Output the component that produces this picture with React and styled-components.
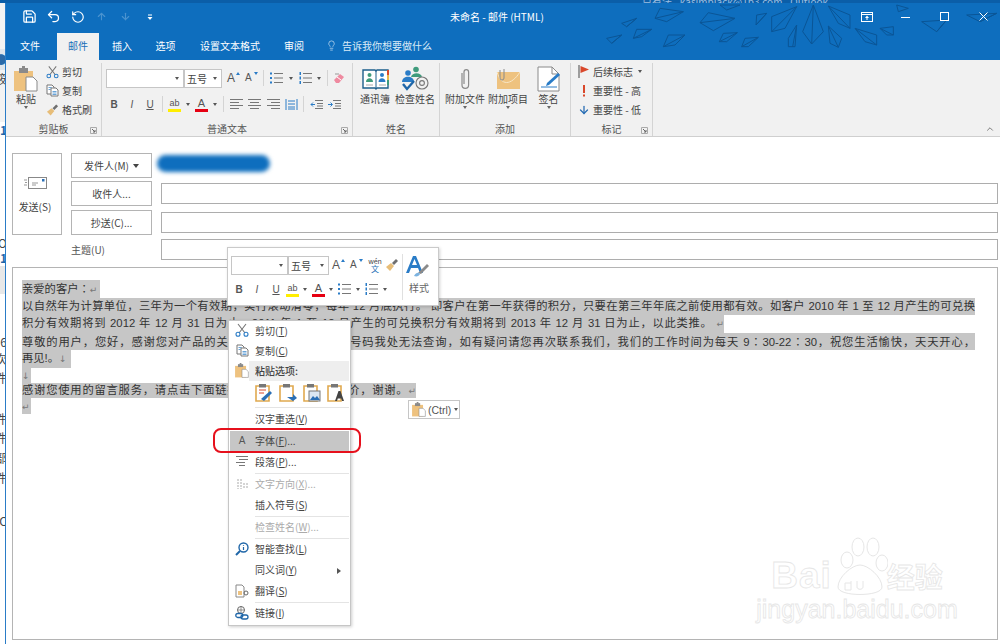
import React from 'react';
import styled, { createGlobalStyle } from 'styled-components';
import { ChevronUp, Save, Undo2, RotateCcw, ArrowUp, ArrowDown, Lightbulb } from 'lucide-react';

const CJK = '"Noto Sans CJK SC", "Liberation Sans", sans-serif';

const GlobalStyle = createGlobalStyle`
  html, body { margin: 0; padding: 0; background: #fff; }
  body { font-family: ${CJK}; font-size: 10px; color: #444; }
  * { box-sizing: border-box; }
`;

const Page = styled.div`
  position: relative;
  width: 1000px;
  height: 644px;
  overflow: hidden;
  background: #fff;
`;

const BackTitle = styled.div`
  height: 3px;
  overflow: hidden;
  background: #0b5ea8;
  color: #9dbfe0;
  font-size: 10px;
  line-height: 3px;
  text-align: center;
  padding-left: 470px;
`;

const Desktop = styled.div`
  display: flex;
  height: 641px;
`;

const BackStrip = styled.div`
  width: 5px;
  flex: none;
  display: flex;
  flex-direction: column;
  overflow: hidden;
  background: #fff;
`;

const BackFrag = styled.div`
  height: ${(p) => p.$h}px;
  width: 12px;
  margin-left: -5px;
  background: ${(p) => p.$bg || 'transparent'};
  color: ${(p) => p.$color || '#444'};
  font-size: 12px;
  line-height: ${(p) => p.$h}px;
  font-weight: ${(p) => (p.$bold ? 700 : 400)};
  text-align: right;
  white-space: nowrap;
`;

const Window = styled.div`
  flex: 1;
  min-width: 0;
  display: flex;
  flex-direction: column;
  border-left: 1px solid #2a7cc7;
  background: #fff;
`;

const TitleBand = styled.div`
  position: relative;
  height: 57px;
  flex: none;
  background: #0e6ebe;
  color: #fff;
`;

const PlaneArt = styled.svg`
  position: absolute;
  right: 0;
  top: 0;
  width: 500px;
  height: 57px;
`;

const TitleBar = styled.div`
  position: relative;
  height: 30px;
  padding-bottom: 3px;
  display: flex;
  align-items: center;
`;

const Quick = styled.div`
  display: flex;
  align-items: center;
  width: 260px;
  padding-left: 15px;
  gap: 7px;
`;

const QuickBtn = styled.span`
  display: inline-flex;
  width: 17px;
  justify-content: center;
  color: ${(p) => (p.$off ? '#4b93cf' : '#fff')};
`;

const DocTitle = styled.div`
  width: 180px;
  margin-left: 184px;
  font-size: 10px;
  white-space: nowrap;
`;

const WinControls = styled.div`
  position: absolute;
  right: 0;
  top: 0;
  height: 28px;
  display: flex;
  align-items: center;
  gap: 7px;
`;

const WinBtn = styled.span`
  display: inline-flex;
  justify-content: center;
  width: 32px;
`;

const Tabs = styled.div`
  position: relative;
  height: 27px;
  display: flex;
  align-items: stretch;
`;

const Tab = styled.div`
  width: ${(p) => p.$w}px;
  margin-left: ${(p) => p.$ml || 0}px;
  padding-bottom: 2px;
  display: flex;
  align-items: center;
  justify-content: center;
  font-size: 10px;
  white-space: nowrap;
  background: ${(p) => (p.$active ? '#f1f1f1' : 'transparent')};
  color: ${(p) => (p.$active ? '#1a6fb8' : '#fff')};
`;

const TellMe = styled.div`
  display: flex;
  align-items: center;
  gap: 5px;
  margin-left: 12px;
  padding-bottom: 2px;
  font-size: 10px;
  color: #dcebf7;
`;

const Ribbon = styled.div`
  position: relative;
  height: 77px;
  flex: none;
  display: flex;
  background: #f1f1f1;
  border-bottom: 1px solid #cfcfcf;
  padding: 3px 0 0;
`;

const Group = styled.div`
  position: relative;
  width: ${(p) => p.$w}px;
  flex: none;
  display: flex;
  flex-direction: column;
  border-right: ${(p) => (p.$plain ? 'none' : '1px solid #d4d4d4')};
`;

const GroupBody = styled.div`
  flex: 1;
  min-height: 0;
  display: flex;
  gap: ${(p) => p.$gap || 0}px;
  flex-direction: ${(p) => (p.$col ? 'column' : 'row')};
  padding-left: ${(p) => p.$pl || 0}px;
`;

const GroupLabel = styled.div`
  height: 15px;
  line-height: 15px;
  text-align: center;
  font-size: 10px;
  color: #555;
`;

const CollapseBar = styled(GroupLabel)`
  text-align: right;
  padding-right: 4px;
  line-height: 17px;
`;

const Launcher = styled.svg`
  position: absolute;
  right: 4px;
  bottom: 2px;
  width: 7px;
  height: 7px;
`;

const LargeBtn = styled.div`
  width: ${(p) => p.$w}px;
  display: flex;
  flex-direction: column;
  align-items: center;
  flex: none;
  font-size: 10px;
  color: #444;
  white-space: nowrap;
`;

const LargeIcon = styled.div`
  height: 25px;
  margin-top: 3px;
  display: flex;
  align-items: center;
  justify-content: center;
`;

const LargeText = styled.div`
  line-height: 15px;
`;

const SmallStack = styled.div`
  display: flex;
  flex-direction: column;
  margin-top: -1px;
`;

const SmallBtn = styled.div`
  height: 19px;
  display: flex;
  align-items: center;
  gap: 3px;
  font-size: 10px;
  white-space: nowrap;
  color: #444;
`;

const IconSlot = styled.span`
  width: ${(p) => p.$w || 13}px;
  display: inline-flex;
  align-items: center;
  justify-content: center;
  flex: none;
`;

const Caret = styled.span`
  display: inline-block;
  width: 0;
  height: 0;
  flex: none;
  margin-left: ${(p) => p.$ml || 0}px;
  border-left: ${(p) => p.$size || 2.5}px solid transparent;
  border-right: ${(p) => p.$size || 2.5}px solid transparent;
  border-top: ${(p) => (p.$size || 2.5) + 0.5}px solid ${(p) => p.$color || '#555'};
`;

const ToolRow = styled.div`
  display: flex;
  align-items: center;
  height: ${(p) => p.$h}px;
  margin-top: ${(p) => p.$mt || 0}px;
  flex: none;
`;

const ComboBox = styled.div`
  width: ${(p) => p.$w}px;
  height: 19px;
  display: flex;
  align-items: center;
  justify-content: space-between;
  padding: 0 4px 0 2px;
  background: #fff;
  border: 1px solid #c6c6c6;
  margin-left: ${(p) => p.$ml || 0}px;
  font-size: 10px;
  color: #444;
  flex: none;
`;

const ToolGap = styled.span`
  display: inline-flex;
  align-items: center;
  flex: none;
  margin-left: ${(p) => p.$ml || 0}px;
`;

const ToolSep = styled.span`
  width: 1px;
  height: 16px;
  flex: none;
  background: #d4d4d4;
  margin-left: ${(p) => p.$ml || 0}px;
`;

const Letter = styled.span`
  flex: none;
  width: ${(p) => p.$w || 12}px;
  margin-left: ${(p) => p.$ml || 0}px;
  text-align: center;
  font-family: "Liberation Sans", sans-serif;
  font-size: 10px;
  font-weight: ${(p) => (p.$b ? 700 : 400)};
  font-style: ${(p) => (p.$i ? 'italic' : 'normal')};
  text-decoration: ${(p) => (p.$u ? 'underline' : 'none')};
  color: #555;
`;

const GrowA = styled.span`
  position: relative;
  flex: none;
  width: 14px;
  margin-left: ${(p) => p.$ml || 0}px;
  font-family: "Liberation Sans", sans-serif;
  font-size: ${(p) => p.$size}px;
  line-height: 14px;
  color: #555;
  &::after {
    content: '';
    position: absolute;
    right: 1px;
    top: 1px;
    border-left: 2.5px solid transparent;
    border-right: 2.5px solid transparent;
    ${(p) => (p.$up ? 'border-bottom: 3px solid #2a7cc7;' : 'border-top: 3px solid #2a7cc7;')}
  }
`;

const ColorLetter = styled.span`
  flex: none;
  width: 13px;
  height: 15px;
  margin-left: ${(p) => p.$ml || 0}px;
  text-align: center;
  font-family: "Liberation Sans", sans-serif;
  font-size: ${(p) => p.$size || 11}px;
  line-height: 12px;
  color: #555;
  border-bottom: 3px solid ${(p) => p.$bar};
`;

const Compose = styled.div`
  flex: 1;
  min-height: 0;
  display: flex;
  flex-direction: column;
  padding: 16px 2px 4px 6px;
`;

const AddressBlock = styled.div`
  display: flex;
  align-items: flex-start;
  gap: 9px;
`;

const SendBtn = styled.div`
  width: 50px;
  height: 82px;
  flex: none;
  display: flex;
  flex-direction: column;
  align-items: center;
  gap: 10px;
  padding: 23px 4px 0 0;
  border: 1px solid #b4b4b4;
  font-size: 10px;
  color: #444;
`;

const Fields = styled.div`
  flex: 1;
  min-width: 0;
  display: flex;
  flex-direction: column;
`;

const FieldRow = styled.div`
  position: relative;
  display: flex;
  align-items: center;
  gap: 9px;
  height: ${(p) => p.$h}px;
  margin-bottom: ${(p) => p.$mb || 0}px;
`;

const AddrBtn = styled.div`
  width: 81px;
  height: 25px;
  flex: none;
  display: flex;
  align-items: center;
  justify-content: center;
  gap: 3px;
  border: 1px solid #b4b4b4;
  background: #fff;
  font-size: 10px;
  color: #444;
`;

const AddrInput = styled.div`
  flex: 1;
  height: 21px;
  border: 1px solid #adadad;
  background: #fff;
`;

const SubjectLabel = styled.div`
  width: 81px;
  flex: none;
  font-size: 10px;
  color: #555;
`;

const BlurName = styled.div`
  width: 113px;
  height: 17px;
  margin-top: -5px;
  margin-left: -4px;
  border-radius: 9px;
  background: #0e6ebe;
  filter: blur(2px);
`;

const BodyBox = styled.div`
  flex: 1;
  min-height: 0;
  margin-top: 7px;
  padding: 12px 0 0 9px;
  border: 1px solid #b4b4b4;
  font-family: "Liberation Sans", ${CJK};
  font-size: 11.3px;
  color: #333;
`;

const TextLine = styled.div`
  width: ${(p) => p.$w}px;
  height: ${(p) => p.$h || 17.5}px;
  line-height: ${(p) => p.$h || 17.5}px;
  background: #c6c6c6;
  white-space: nowrap;
  overflow: hidden;
  text-align-last: ${(p) => (p.$fit ? 'justify' : 'left')};
`;

const Mark = styled.span`
  font-family: "DejaVu Sans", sans-serif;
  font-size: 9px;
  color: #777;
`;

const Colon = styled.span`
  font-family: "Noto Sans CJK TC", sans-serif;
`;

const MiniBar = styled.div`
  position: absolute;
  left: 227px;
  top: 247px;
  width: 212px;
  height: 59px;
  display: flex;
  padding: 7px 3px 0 3px;
  background: #fff;
  border: 1px solid #cacaca;
  box-shadow: 1px 1px 3px rgba(0, 0, 0, 0.18);
`;

const MiniLeft = styled.div`
  width: 168px;
  flex: none;
`;

const MiniRight = styled.div`
  flex: 1;
  display: flex;
  flex-direction: column;
  align-items: center;
  margin: -1px 0 5px 3px;
  border-left: 1px solid #e0e0e0;
  font-size: 10px;
  color: #666;
  gap: 2px;
`;

const WenBtn = styled.span`
  flex: none;
  width: 16px;
  margin-left: ${(p) => p.$ml}px;
  display: flex;
  flex-direction: column;
  align-items: center;
  font-size: 7px;
  line-height: 8px;
  color: #444;
  & b {
    font-weight: 400;
    color: #1f6fb5;
    font-size: 8px;
  }
`;

const Menu = styled.div`
  position: absolute;
  left: 228px;
  top: 320px;
  width: 123px;
  height: 306px;
  padding: 0 1px;
  background: #fff;
  border: 1px solid #c6c6c6;
  box-shadow: 1px 1px 3px rgba(0, 0, 0, 0.2);
`;

const MenuRow = styled.div`
  height: ${(p) => p.$h || 21}px;
  display: flex;
  align-items: center;
  font-size: 10px;
  color: ${(p) => (p.$off ? '#ababab' : '#444')};
  background: ${(p) => (p.$hot ? '#c6c6c6' : 'transparent')};
`;

const MenuIcon = styled.span`
  width: 24px;
  flex: none;
  display: inline-flex;
  justify-content: center;
  margin-bottom: 2px;
  color: ${(p) => (p.$off ? '#ababab' : '#555')};
  font-family: "Liberation Sans", sans-serif;
`;

const MenuText = styled.span`
  flex: 1;
  margin-left: ${(p) => (p.$band ? -5 : 0)}px;
  height: 100%;
  display: flex;
  align-items: center;
  padding-left: ${(p) => (p.$band ? 6 : 1)}px;
  padding-bottom: 2px;
  background: ${(p) => (p.$band ? '#eeeeee' : 'transparent')};
  font-weight: ${(p) => (p.$band ? 500 : 400)};
  & u {
    text-underline-offset: 1px;
  }
`;

const MenuArrow = styled.span`
  margin-right: 8px;
  border-top: 3px solid transparent;
  border-bottom: 3px solid transparent;
  border-left: 4px solid #555;
`;

const MenuSep = styled.div`
  height: 1px;
  margin-left: 25px;
  background: #e4e4e4;
`;

const PasteIcons = styled.div`
  height: 26px;
  display: flex;
  align-items: center;
  gap: 6px;
  padding: 0 0 3px 25px;
`;

const RedRing = styled.div`
  position: absolute;
  left: 213px;
  top: 428px;
  width: 148px;
  height: 25px;
  border: 2.5px solid #e6101c;
  border-radius: 8px;
`;

const CtrlTag = styled.div`
  position: absolute;
  left: 408px;
  top: 400px;
  width: 52px;
  height: 19px;
  display: flex;
  align-items: center;
  gap: 2px;
  padding-left: 3px;
  background: #fff;
  border: 1px solid #c6c6c6;
  font-family: "Liberation Sans", sans-serif;
  font-size: 10.5px;
  color: #555;
`;

const Watermark = styled.div`
  position: absolute;
  left: 767px;
  top: 535px;
  width: 180px;
  height: 92px;
  display: flex;
  flex-direction: column;
  align-items: center;
  color: #fff;
  -webkit-text-stroke: 0.8px #e6e6e6;
`;

const WaterTop = styled.div`
  display: flex;
  align-items: flex-end;
  height: 63px;
`;

const WaterBai = styled.span`
  font-family: "Liberation Sans", sans-serif;
  font-weight: 700;
  font-size: 37px;
  line-height: 44px;
  letter-spacing: 1px;
`;

const WaterJing = styled.span`
  font-size: 28px;
  line-height: 44px;
  font-weight: 700;
  margin-left: -1px;
`;

const WaterUrl = styled.div`
  font-family: "Liberation Sans", sans-serif;
  font-size: 25px;
  line-height: 22px;
  white-space: nowrap;
`;

const Ico = ({ w, h, vb, children }) => (
  <svg width={w} height={h} viewBox={vb || `0 0 ${w} ${h}`} fill="none">
    {children}
  </svg>
);

const PLANES = [
  'M940 15L908 95L935 132L970 95ZM940 15L935 132',
  'M890 20L815 50L815 95L855 85ZM890 20L815 95',
  'M985 18L1050 45L1050 85L1015 70ZM985 18L1050 85',
  'M705 55L625 38L600 68L640 92ZM705 55L600 68',
  'M550 35L480 25L465 55L500 65ZM550 35L465 55',
  'M800 40L770 45L768 75ZM800 40L768 75',
  'M985 78L1025 115L1015 142L990 130ZM985 78L1015 142',
  'M890 75L865 115L865 140L885 140ZM890 75L878 140',
  'M1065 85L1130 105L1130 135L1095 125ZM1065 85L1130 135',
  'M1140 85L1180 80L1180 105L1160 105ZM1140 85L1180 105',
  'M455 88L410 88L400 115L425 110ZM455 88L400 115',
  'M410 55L365 70L380 80ZM410 55L380 80',
  'M365 105L320 115L335 130ZM365 105L335 130',
  'M555 105L505 105L490 140L525 135ZM555 105L490 140',
  'M712 98L670 100L658 125L680 125ZM712 98L658 125',
  'M775 112L735 115L725 140L745 140ZM775 112L725 140',
  'M1340 60L1265 65L1310 95ZM1340 60L1310 95',
  'M1490 40L1400 45L1440 65ZM1490 40L1440 65',
  'M720 15L660 15L680 30Z',
  'M1225 25L1190 15L1195 35Z',
];

const Scissors = () => (
  <Ico w={14} h={14}>
    <path d="M3 1l7 9M11 1L4 10" stroke="#777" strokeWidth="1.1" />
    <circle cx="3" cy="11.3" r="2" stroke="#2a7cc7" strokeWidth="1.1" />
    <circle cx="11" cy="11.3" r="2" stroke="#2a7cc7" strokeWidth="1.1" />
  </Ico>
);

const CopyDocs = () => (
  <Ico w={13} h={13}>
    <path d="M1 1h5l2 2v7H1z" fill="#fff" stroke="#777" />
    <path d="M5 4h5l2 2v6H5z" fill="#fff" stroke="#777" />
    <path d="M6.5 7.5h4M6.5 9h4M6.5 10.5h4" stroke="#2a7cc7" strokeWidth=".7" />
    <path d="M2.5 3.5h3M2.5 5.5h2" stroke="#2a7cc7" strokeWidth=".7" />
  </Ico>
);

const Brush = () => (
  <Ico w={14} h={14}>
    <path d="M1 9l5-4 3 3-4 5z" fill="#e7bd78" />
    <path d="M7 5l4-4 2 2-4 4z" fill="#6f6f6f" />
  </Ico>
);

const Board = ({ w = 24, h = 26 }) => (
  <Ico w={w} h={h} vb="0 0 24 26">
    <rect x="0" y="5" width="19" height="20" fill="#eec27f" />
    <rect x="5" y="2" width="9" height="5" fill="#8a8a8a" />
    <rect x="8" y="0" width="3" height="3" fill="#8a8a8a" />
    <path d="M12 11h7l4 4v10H12z" fill="#fff" stroke="#8a8a8a" />
  </Ico>
);

const PasteChoice = ({ children }) => (
  <Ico w={18} h={19} vb="0 0 18 19">
    <path d="M1 3h13v15H1z" fill="#fff" stroke="#e0a94f" strokeWidth="1.6" />
    <rect x="4" y="1" width="7" height="3.5" fill="#777" />
    {children}
  </Ico>
);

const Lines = ({ rows, bullets, nums }) => (
  <Ico w={13} h={12}>
    {rows.map(([x1, x2], i) => (
      <path key={i} d={`M${x1} ${1.5 + i * (9 / (rows.length - 1))}H${x2}`} stroke="#777" />
    ))}
    {bullets && [1.5, 6, 10.5].map((y) => <rect key={y} x="0" y={y - 1} width="2" height="2" fill="#2a7cc7" />)}
    {nums && [1.5, 6, 10.5].map((y) => <rect key={y} x=".5" y={y - 1.5} width="1.5" height="3" fill="#2a7cc7" />)}
  </Ico>
);

const ALIGN_LEFT = [[0, 13], [0, 9], [0, 13], [0, 9]];
const ALIGN_MID = [[0, 13], [2, 11], [0, 13], [2, 11]];
const ALIGN_RIGHT = [[0, 13], [4, 13], [0, 13], [4, 13]];
const LIST = [[4, 13], [4, 13], [4, 13]];

const BookIcon = () => (
  <Ico w={27} h={23}>
    <path d="M1 3h12l1 1 1-1h11v18H15l-1 1-1-1H1z" fill="#fff" stroke="#1d5f8c" strokeWidth="1.4" />
    <path d="M14 4v17" stroke="#1d5f8c" />
    <circle cx="7.5" cy="8" r="2" fill="#3f9b7c" />
    <path d="M4 15c0-5 7-5 7 0z" fill="#3f9b7c" />
    <circle cx="20" cy="8" r="2" fill="#2a7cc7" />
    <path d="M16.5 15c0-5 7-5 7 0z" fill="#2a7cc7" />
    <path d="M4 18h7M17 18h7" stroke="#aaa" />
    <path d="M26 3v5" stroke="#d9482b" strokeWidth="2" />
    <path d="M26 8v5" stroke="#e9b949" strokeWidth="2" />
    <path d="M26 13v5" stroke="#3f9b7c" strokeWidth="2" />
  </Ico>
);

const CheckNames = () => (
  <Ico w={28} h={25}>
    <circle cx="15" cy="3.5" r="2.8" fill="#3f9b7c" />
    <circle cx="7" cy="7" r="2.8" fill="#2a7cc7" />
    <path d="M1 16c0-7 12-7 12 0z" fill="#2a7cc7" />
    <path d="M10 11c1-5 10-5 11 0z" fill="#3f9b7c" />
    <path d="M2 18l4 5 7-8" stroke="#1f66a8" strokeWidth="2.4" />
    <circle cx="21" cy="17" r="6" stroke="#777" strokeWidth="1.1" />
    <circle cx="21" cy="17" r="2.4" stroke="#777" strokeWidth="1.1" />
  </Ico>
);

const PaperClip = () => (
  <Ico w={12} h={24}>
    <path d="M3 6v12a3.3 3.3 0 006.6 0V5A2.3 2.3 0 005 5v12" stroke="#8a8a8a" strokeWidth="1.2" />
  </Ico>
);

const Envelope = () => (
  <Ico w={24} h={24}>
    <rect x="1" y="5" width="23" height="17" fill="#eec27f" />
    <path d="M1 5c4 14 14 14 23 0" stroke="#f8e6c6" />
    <path d="M4 3v8a2 2 0 004 0V2" stroke="#8a8a8a" />
  </Ico>
);

const SignDoc = () => (
  <Ico w={24} h={26}>
    <path d="M1 1h14l7 7v17H1z" fill="#fff" stroke="#8a8a8a" />
    <path d="M15 1v7h7" stroke="#8a8a8a" />
    <path d="M4 21h16" stroke="#2a7cc7" />
    <path d="M9 20l1-3 11-10 2 2-11 10z" fill="#2a7cc7" />
  </Ico>
);

const Launch = () => (
  <Launcher viewBox="0 0 7 7">
    <path d="M.5 6.5V.5h6v6z" stroke="#aaa" fill="none" />
    <path d="M2 2l3 3M5 3v2H3" stroke="#666" fill="none" />
  </Launcher>
);

const StyleA = () => (
  <Ico w={30} h={24}>
    <path d="M2 19L9 2h3l7 17h-3l-2-5H7l-2 5zM8 11h5l-2.5-6z" fill="#2a7cc7" />
    <path d="M14 19l9-9 2 2-8 8z" fill="#8a8a8a" />
    <path d="M10 22c2-4 5-4 6-2-1 2-3 3-6 2z" fill="#7cb3e0" />
  </Ico>
);

const SMALL_TOOLS = [
  ['剪切', <Scissors key="a" />],
  ['复制', <CopyDocs key="b" />],
  ['格式刷', <Brush key="c" />],
];

export default function App() {
  return (
    <Page>
      <GlobalStyle />
      <BackTitle>只有法 - kasimblack@1b3.com - Outlook</BackTitle>
      <Desktop>
        <BackStrip>
          <BackFrag $h={46} $bg="#f3f3f3" />
          <BackFrag $h={21} $bg="#dfe6ec" $color="#2a6aa8">●</BackFrag>
          <BackFrag $h={18} $bg="#f3f3f3">筱</BackFrag>
          <BackFrag $h={34} $bg="#f3f3f3" />
          <BackFrag $h={16} $color="#1f66a8" $bold>1</BackFrag>
          <BackFrag $h={98} />
          <BackFrag $h={14}>O</BackFrag>
          <BackFrag $h={16} $color="#1f66a8" $bold>1</BackFrag>
          <BackFrag $h={28} $bg="#e8e8e8" />
          <BackFrag $h={40} />
          <BackFrag $h={16}>6</BackFrag>
          <BackFrag $h={18}>次</BackFrag>
          <BackFrag $h={20}>件</BackFrag>
          <BackFrag $h={22} />
          <BackFrag $h={18}>件</BackFrag>
          <BackFrag $h={20}>件</BackFrag>
          <BackFrag $h={20}>部</BackFrag>
          <BackFrag $h={20}>件</BackFrag>
          <BackFrag $h={24} />
          <BackFrag $h={18}>C</BackFrag>
        </BackStrip>
        <Window>
          <TitleBand>
            <PlaneArt viewBox="0 9 1500 171" fill="none" stroke="#0a5596" strokeWidth="3">
              {PLANES.map((d) => <path key={d} d={d} />)}
            </PlaneArt>
            <TitleBar>
              <Quick>
                <QuickBtn><Save size={15} strokeWidth={2} /></QuickBtn>
                <QuickBtn><Undo2 size={15} strokeWidth={2} /></QuickBtn>
                <QuickBtn><RotateCcw size={14} strokeWidth={2} /></QuickBtn>
                <QuickBtn $off><ArrowUp size={11} strokeWidth={2.4} /></QuickBtn>
                <QuickBtn $off><ArrowDown size={11} strokeWidth={2.4} /></QuickBtn>
                <QuickBtn>
                  <Ico w={6} h={6}>
                    <path d="M1 1h4" stroke="#fff" />
                    <path d="M.5 3h5L3 6z" fill="#fff" />
                  </Ico>
                </QuickBtn>
              </Quick>
              <DocTitle>未命名 - 邮件 (HTML)</DocTitle>
              <WinControls>
                <WinBtn>
                  <Ico w={12} h={10}>
                    <rect x=".5" y=".5" width="11" height="9" stroke="#fff" />
                    <path d="M.5 2.5h11" stroke="#fff" />
                    <path d="M6 3.5L8 6H4z" fill="#fff" />
                    <path d="M6 5.5V8" stroke="#fff" />
                  </Ico>
                </WinBtn>
                <WinBtn>
                  <Ico w={10} h={10}><path d="M0 5.5h9" stroke="#fff" /></Ico>
                </WinBtn>
                <WinBtn>
                  <Ico w={10} h={10}><rect x=".5" y=".5" width="8" height="8" stroke="#fff" /></Ico>
                </WinBtn>
                <WinBtn>
                  <Ico w={10} h={10}><path d="M.5.5l8 8M8.5.5l-8 8" stroke="#fff" /></Ico>
                </WinBtn>
              </WinControls>
            </TitleBar>
            <Tabs>
              <Tab $w={48}>文件</Tab>
              <Tab $w={42} $ml={3} $active>邮件</Tab>
              <Tab $w={46}>插入</Tab>
              <Tab $w={41}>选项</Tab>
              <Tab $w={88}>设置文本格式</Tab>
              <Tab $w={40}>审阅</Tab>
              <TellMe>
                <Lightbulb size={11} strokeWidth={1.4} />
                告诉我你想要做什么
              </TellMe>
            </Tabs>
          </TitleBand>

          <Ribbon>
            <Group $w={96}>
              <GroupBody $pl={4} $gap={4}>
                <LargeBtn $w={32}>
                  <LargeIcon><Board /></LargeIcon>
                  <LargeText>粘贴</LargeText>
                  <Caret $color="#666" />
                </LargeBtn>
                <SmallStack>
                  {SMALL_TOOLS.map(([text, icon]) => (
                    <SmallBtn key={text}><IconSlot>{icon}</IconSlot>{text}</SmallBtn>
                  ))}
                </SmallStack>
              </GroupBody>
              <GroupLabel>剪贴板</GroupLabel>
              <Launch />
            </Group>

            <Group $w={251}>
              <GroupBody $col $pl={4}>
                <ToolRow $h={20} $mt={5}>
                  <ComboBox $w={78}><span /><Caret /></ComboBox>
                  <ComboBox $w={38}>五号<Caret /></ComboBox>
                  <GrowA $size={12} $up $ml={5}>A</GrowA>
                  <GrowA $size={10} $ml={4}>A</GrowA>
                  <ToolSep $ml={4} />
                  <ToolGap $ml={6}><Lines rows={LIST} bullets /></ToolGap>
                  <Caret $ml={6} />
                  <ToolGap $ml={6}><Lines rows={LIST} nums /></ToolGap>
                  <Caret $ml={5} />
                  <ToolSep $ml={6} />
                  <ToolGap $ml={5}>
                    <Ico w={13} h={13}>
                      <path d="M1 8l6-6 4 3-5 6H3z" fill="#ef8aa0" />
                      <path d="M4 5l4 3" stroke="#fff" />
                      <path d="M2 2h4" stroke="#999" />
                    </Ico>
                  </ToolGap>
                </ToolRow>
                <ToolRow $h={18} $mt={7}>
                  <Letter $b $ml={2}>B</Letter>
                  <Letter $i $ml={6}>I</Letter>
                  <Letter $u $ml={6}>U</Letter>
                  <ToolSep $ml={6} />
                  <ColorLetter $bar="#ffee00" $size={9} $ml={5}>ab</ColorLetter>
                  <Caret $ml={5} />
                  <ColorLetter $bar="#e60012" $ml={5}>A</ColorLetter>
                  <Caret $ml={5} />
                  <ToolSep $ml={6} />
                  <ToolGap $ml={6}><Lines rows={ALIGN_LEFT} /></ToolGap>
                  <ToolGap $ml={5}><Lines rows={ALIGN_MID} /></ToolGap>
                  <ToolGap $ml={6}><Lines rows={ALIGN_RIGHT} /></ToolGap>
                  <ToolGap $ml={5}>
                    <Ico w={13} h={13}>
                      <path d="M1 1v11M12 1v11M3 3h7M3 6h7M3 9h7M3 11h7" stroke="#2a7cc7" />
                    </Ico>
                  </ToolGap>
                  <ToolSep $ml={5} />
                  <ToolGap $ml={6}>
                    <Ico w={13} h={11}>
                      <path d="M5 1.5h8M7 4.5h6M7 7h6M5 9.5h8" stroke="#777" />
                      <path d="M5 5.5H1M3 3.5l-2 2 2 2" stroke="#2a7cc7" />
                    </Ico>
                  </ToolGap>
                  <ToolGap $ml={5}>
                    <Ico w={13} h={11}>
                      <path d="M5 1.5h8M7 4.5h6M7 7h6M5 9.5h8" stroke="#777" />
                      <path d="M0 5.5h4M2.5 3.5l2 2-2 2" stroke="#2a7cc7" />
                    </Ico>
                  </ToolGap>
                </ToolRow>
              </GroupBody>
              <GroupLabel>普通文本</GroupLabel>
              <Launch />
            </Group>

            <Group $w={87}>
              <GroupBody $pl={4}>
                <LargeBtn $w={36}><LargeIcon><BookIcon /></LargeIcon><LargeText>通讯簿</LargeText></LargeBtn>
                <LargeBtn $w={44}><LargeIcon><CheckNames /></LargeIcon><LargeText>检查姓名</LargeText></LargeBtn>
              </GroupBody>
              <GroupLabel>姓名</GroupLabel>
            </Group>

            <Group $w={131}>
              <GroupBody $pl={4}>
                <LargeBtn $w={42}><LargeIcon><PaperClip /></LargeIcon><LargeText>附加文件</LargeText><Caret $color="#666" /></LargeBtn>
                <LargeBtn $w={44}><LargeIcon><Envelope /></LargeIcon><LargeText>附加项目</LargeText><Caret $color="#666" /></LargeBtn>
                <LargeBtn $w={37}><LargeIcon><SignDoc /></LargeIcon><LargeText>签名</LargeText><Caret $color="#666" /></LargeBtn>
              </GroupBody>
              <GroupLabel>添加</GroupLabel>
            </Group>

            <Group $w={82}>
              <GroupBody $pl={6}>
                <SmallStack>
                  <SmallBtn>
                    <IconSlot>
                      <Ico w={12} h={13}>
                        <path d="M1 0v13" stroke="#666" strokeWidth="1.2" />
                        <path d="M2.5 1L11 4.5 2.5 8z" fill="#d9482b" />
                      </Ico>
                    </IconSlot>
                    后续标志<Caret $ml={2} />
                  </SmallBtn>
                  <SmallBtn>
                    <IconSlot>
                      <Ico w={4} h={12}><path d="M2 0v8" stroke="#d9482b" strokeWidth="2" /><path d="M2 9.5v2" stroke="#d9482b" strokeWidth="2" /></Ico>
                    </IconSlot>
                    重要性 - 高
                  </SmallBtn>
                  <SmallBtn>
                    <IconSlot><ArrowDown size={12} color="#2a6fb5" strokeWidth={2.6} /></IconSlot>
                    重要性 - 低
                  </SmallBtn>
                </SmallStack>
              </GroupBody>
              <GroupLabel>标记</GroupLabel>
              <Launch />
            </Group>
            <Group $w={346} $plain>
              <GroupBody />
              <CollapseBar>
                <ChevronUp size={10} strokeWidth={2} color="#666" />
              </CollapseBar>
            </Group>
          </Ribbon>

          <Compose>
            <AddressBlock>
              <SendBtn>
                <Ico w={23} h={12}>
                  <rect x="4.5" y=".5" width="18" height="11" fill="#fff" stroke="#888" />
                  <rect x="18" y="2" width="2.5" height="2.5" fill="#2a6fb5" />
                  <path d="M8 6h6M8 8h4M0 3h3M1 5.5h2M0 8h3" stroke="#999" />
                </Ico>
                发送(S)
              </SendBtn>
              <Fields>
                <FieldRow $h={25} $mb={3}>
                  <AddrBtn>发件人(M)<Caret $ml={1} $size={3.5} $color="#444" /></AddrBtn>
                  <BlurName />
                </FieldRow>
                <FieldRow $h={25} $mb={4}>
                  <AddrBtn>收件人...</AddrBtn>
                  <AddrInput />
                </FieldRow>
                <FieldRow $h={25} $mb={3}>
                  <AddrBtn>抄送(C)...</AddrBtn>
                  <AddrInput />
                </FieldRow>
                <FieldRow $h={22}>
                  <SubjectLabel>主题(U)</SubjectLabel>
                  <AddrInput />
                </FieldRow>
              </Fields>
            </AddressBlock>
            <BodyBox>
              <TextLine $w={78}>亲爱的客户<Colon>：</Colon><Mark>↵</Mark></TextLine>
              <TextLine $w={953} $fit>以自然年为计算单位，三年为一个有效期，实行滚动清零，每年 12 月底执行。 即客户在第一年获得的积分，只要在第三年年底之前使用都有效。如客户 2010 年 1 至 12 月产生的可兑换</TextLine>
              <TextLine $w={702} $fit>积分有效期将到 2012 年 12 月 31 日为止，2011 年 1 至 12 月产生的可兑换积分有效期将到 2013 年 12 月 31 日为止，以此类推。 <Mark>↵</Mark></TextLine>
              <TextLine $w={953} $fit>尊敬的用户，您好，感谢您对产品的关注，很抱歉，由于您的号码我处无法查询，如有疑问请您再次联系我们，我们的工作时间为每天 9<Colon>：</Colon>30-22<Colon>：</Colon>30，祝您生活愉快，天天开心，</TextLine>
              <TextLine $w={49}>再见!。<Mark>↓</Mark></TextLine>
              <TextLine $w={9} $h={15}><Mark>↓</Mark></TextLine>
              <TextLine $w={394} $h={15} $fit>感谢您使用的留言服务，请点击下面链接对我们的服务进行评价，谢谢。<Mark>↵</Mark></TextLine>
              <TextLine $w={9} $h={16}><Mark>↵</Mark></TextLine>
            </BodyBox>
          </Compose>
        </Window>
      </Desktop>

      <MiniBar>
        <MiniLeft>
          <ToolRow $h={20}>
            <ComboBox $w={57}><span /><Caret /></ComboBox>
            <ComboBox $w={41}>五号<Caret /></ComboBox>
            <GrowA $size={12} $up $ml={3}>A</GrowA>
            <GrowA $size={10} $ml={4}>A</GrowA>
            <WenBtn $ml={3}>wén<b>文</b></WenBtn>
            <ToolGap $ml={2}><Brush /></ToolGap>
          </ToolRow>
          <ToolRow $h={18} $mt={5}>
            <Letter $b $ml={2}>B</Letter>
            <Letter $i $ml={6}>I</Letter>
            <Letter $u $ml={7}>U</Letter>
            <ColorLetter $bar="#ffee00" $size={9} $ml={4}>ab</ColorLetter>
            <Caret $ml={4} />
            <ColorLetter $bar="#e60012" $ml={5}>A</ColorLetter>
            <Caret $ml={4} />
            <ToolGap $ml={5}><Lines rows={LIST} bullets /></ToolGap>
            <Caret $ml={5} />
            <ToolGap $ml={5}><Lines rows={LIST} nums /></ToolGap>
            <Caret $ml={5} />
          </ToolRow>
        </MiniLeft>
        <MiniRight>
          <StyleA />
          样式
        </MiniRight>
      </MiniBar>

      <Menu>
        <MenuRow $h={20}>
          <MenuIcon><Scissors /></MenuIcon>
          <MenuText>剪切(<u>T</u>)</MenuText>
        </MenuRow>
        <MenuRow $h={20}>
          <MenuIcon><CopyDocs /></MenuIcon>
          <MenuText>复制(<u>C</u>)</MenuText>
        </MenuRow>
        <MenuRow $h={20}>
          <MenuIcon><Board w={14} h={15} /></MenuIcon>
          <MenuText $band>粘贴选项:</MenuText>
        </MenuRow>
        <PasteIcons>
          <PasteChoice>
            <path d="M4 7h7M4 10h5" stroke="#d9482b" />
            <path d="M6 16l9-8 2 2-8 8z" fill="#2a6fb5" />
          </PasteChoice>
          <PasteChoice>
            <path d="M8 14h6v-3l4 4-4 3z" fill="#2a6fb5" />
          </PasteChoice>
          <PasteChoice>
            <rect x="6" y="8" width="11" height="10" fill="#dbe7f2" stroke="#777" />
            <path d="M7 17l3-4 2 2 2-2 3 4z" fill="#2a6fb5" />
          </PasteChoice>
          <PasteChoice>
            <path d="M8 18l3.5-10h2L17 18h-2l-.8-2.5h-3.4L10 18z" fill="#444" />
          </PasteChoice>
        </PasteIcons>
        <MenuSep />
        <MenuRow $h={23}>
          <MenuIcon />
          <MenuText>汉字重选(<u>V</u>)</MenuText>
        </MenuRow>
        <MenuRow $hot $h={20}>
          <MenuIcon>A</MenuIcon>
          <MenuText>字体(<u>F</u>)...</MenuText>
        </MenuRow>
        <MenuRow $h={22}>
          <MenuIcon><Lines rows={[[0, 12], [3, 12], [0, 9], [3, 9]]} /></MenuIcon>
          <MenuText>段落(<u>P</u>)...</MenuText>
        </MenuRow>
        <MenuSep />
        <MenuRow $off>
          <MenuIcon $off>
            <Ico w={13} h={13}><path d="M2 2v10M5 2v10M8 6v6M11 6v6" stroke="#aaa" strokeDasharray="2 1" /></Ico>
          </MenuIcon>
          <MenuText>文字方向(<u>X</u>)...</MenuText>
        </MenuRow>
        <MenuRow>
          <MenuIcon />
          <MenuText>插入符号(<u>S</u>)</MenuText>
        </MenuRow>
        <MenuSep />
        <MenuRow $off>
          <MenuIcon />
          <MenuText>检查姓名(<u>W</u>)...</MenuText>
        </MenuRow>
        <MenuSep />
        <MenuRow>
          <MenuIcon>
            <Ico w={14} h={14}>
              <circle cx="8.5" cy="5.5" r="4.5" stroke="#1f66a8" strokeWidth="1.4" />
              <path d="M5 9l-4 4" stroke="#1f66a8" strokeWidth="2" />
              <path d="M8.5 3v.8M8.5 5v3" stroke="#1f66a8" strokeWidth="1.2" />
            </Ico>
          </MenuIcon>
          <MenuText>智能查找(<u>L</u>)</MenuText>
        </MenuRow>
        <MenuRow>
          <MenuIcon />
          <MenuText>同义词(<u>Y</u>)</MenuText>
          <MenuArrow />
        </MenuRow>
        <MenuRow>
          <MenuIcon>
            <Ico w={14} h={14}>
              <path d="M1 1h6l2 2v10H1z" fill="#fff" stroke="#888" />
              <rect x="3" y="7" width="4" height="4" fill="#eec27f" />
              <circle cx="11" cy="9" r="2" stroke="#666" />
            </Ico>
          </MenuIcon>
          <MenuText>翻译(<u>S</u>)</MenuText>
        </MenuRow>
        <MenuSep />
        <MenuRow>
          <MenuIcon>
            <Ico w={14} h={14}>
              <circle cx="6" cy="4" r="3.5" stroke="#666" />
              <path d="M3 4h6M6 .5v7" stroke="#666" strokeWidth=".7" />
              <rect x=".8" y="7.5" width="7" height="4" rx="2" stroke="#1f66a8" strokeWidth="1.3" />
              <rect x="6" y="9" width="7" height="4" rx="2" stroke="#1f66a8" strokeWidth="1.3" />
            </Ico>
          </MenuIcon>
          <MenuText>链接(<u>I</u>)</MenuText>
        </MenuRow>
      </Menu>

      <RedRing />

      <CtrlTag>
        <Board w={14} h={15} />
        (Ctrl)
        <Caret $ml={1} />
      </CtrlTag>

      <Watermark>
        <WaterTop>
          <WaterBai>Bai</WaterBai>
          <Ico w={56} h={63}>
            <g stroke="#e6e6e6" fill="#fff">
              <ellipse cx="15" cy="25" rx="6" ry="8" />
              <ellipse cx="26" cy="12" rx="6" ry="9" />
              <ellipse cx="41" cy="12" rx="6" ry="9" />
              <ellipse cx="50" cy="28" rx="6" ry="8" />
              <path d="M6 52c0-10 14-22 22-22s22 12 22 22c0 10-44 10-44 0z" />
              <path d="M19 46v9h-6v-7h6M25 46v6c0 3 6 3 6 0v-6" />
            </g>
          </Ico>
          <WaterJing>经验</WaterJing>
        </WaterTop>
        <WaterUrl>jingyan.baidu.com</WaterUrl>
      </Watermark>
    </Page>
  );
}
